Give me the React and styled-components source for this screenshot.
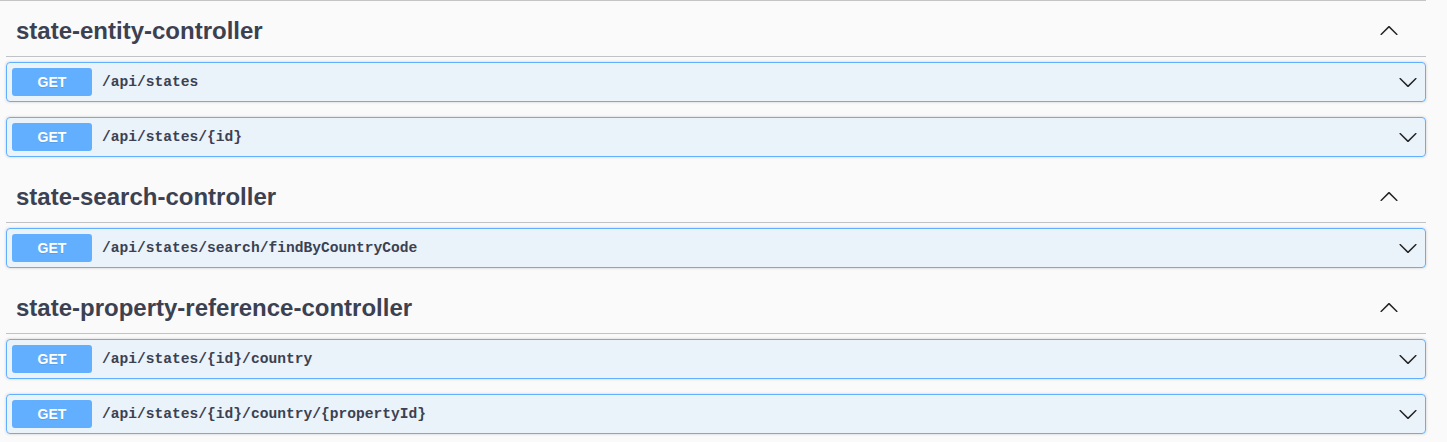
import React from 'react';
import styled, { createGlobalStyle } from 'styled-components';

const GlobalStyle = createGlobalStyle`
  html, body {
    margin: 0;
    padding: 0;
    background: #fafafa;
  }
  body {
    font-family: "Liberation Sans", Arial, sans-serif;
    color: #3b4151;
  }
`;

const Page = styled.div`
  width: 1426px;
  border-top: 1px solid #c4c4c4;
  padding-top: 5px;
`;

const Section = styled.section`
  margin-left: 6px;
  width: 1420px;
`;

const TagHeader = styled.div`
  height: 50px;
  display: flex;
  align-items: center;
  justify-content: space-between;
  padding: 0 20px 0 10px;
  border-bottom: 1px solid rgba(59, 65, 81, 0.3);
  margin-bottom: 5px;
  box-sizing: content-box;
`;

const TagTitle = styled.h3`
  margin: 0;
  font-size: 24px;
  font-weight: 700;
  color: #3b4151;
  font-family: "Liberation Sans", Arial, sans-serif;
`;

const ToggleButton = styled.button`
  border: none;
  background: none;
  padding: 0 7px 0 0;
  display: flex;
  align-items: center;
  cursor: pointer;
  color: #000;
`;

const Opblock = styled.div`
  height: 38px;
  display: flex;
  align-items: center;
  padding: 0 5px;
  margin-bottom: 15px;
  border: 1px solid #61affe;
  border-radius: 4px;
  background: rgba(97, 175, 254, 0.1);
  box-shadow: 0 0 3px rgba(0, 0, 0, 0.19);
`;

const Method = styled.span`
  width: 80px;
  height: 28px;
  display: flex;
  align-items: center;
  justify-content: center;
  border-radius: 3px;
  background: #61affe;
  color: #fff;
  font-size: 14px;
  font-weight: 700;
  font-family: "Liberation Sans", Arial, sans-serif;
  text-shadow: 0 1px 0 rgba(0, 0, 0, 0.1);
`;

const Path = styled.span`
  flex: 1;
  padding-left: 10px;
  font-family: "Liberation Mono", "DejaVu Sans Mono", monospace;
  font-size: 14.6px;
  font-weight: 700;
  color: #3b4151;
`;

const Chevron = ({ up }) => (
  <svg width="20" height="20" viewBox="0 0 20 20" style={{ transform: up ? 'rotate(180deg)' : 'none' }}>
    <path
      fill="#222"
      d="M17.418 6.109c.272-.268.709-.268.979 0s.271.701 0 .969l-7.908 7.83c-.27.268-.707.268-.979 0l-7.908-7.83c-.27-.268-.27-.701 0-.969.271-.268.709-.268.979 0L10 13.25l7.418-7.141z"
    />
  </svg>
);

const ArrowSlot = styled.span`
  display: flex;
  align-items: center;
  padding-right: 2px;
`;

const sections = [
  { name: 'state-entity-controller', paths: ['/api/states', '/api/states/{id}'] },
  { name: 'state-search-controller', paths: ['/api/states/search/findByCountryCode'] },
  {
    name: 'state-property-reference-controller',
    paths: ['/api/states/{id}/country', '/api/states/{id}/country/{propertyId}'],
  },
];

const App = () => (
  <>
    <GlobalStyle />
    <Page>
      {sections.map((s) => (
        <Section key={s.name}>
          <TagHeader>
            <TagTitle>{s.name}</TagTitle>
            <ToggleButton>
              <Chevron up />
            </ToggleButton>
          </TagHeader>
          {s.paths.map((p) => (
            <Opblock key={p}>
              <Method>GET</Method>
              <Path>{p}</Path>
              <ArrowSlot>
                <Chevron />
              </ArrowSlot>
            </Opblock>
          ))}
        </Section>
      ))}
    </Page>
  </>
);

export default App;
